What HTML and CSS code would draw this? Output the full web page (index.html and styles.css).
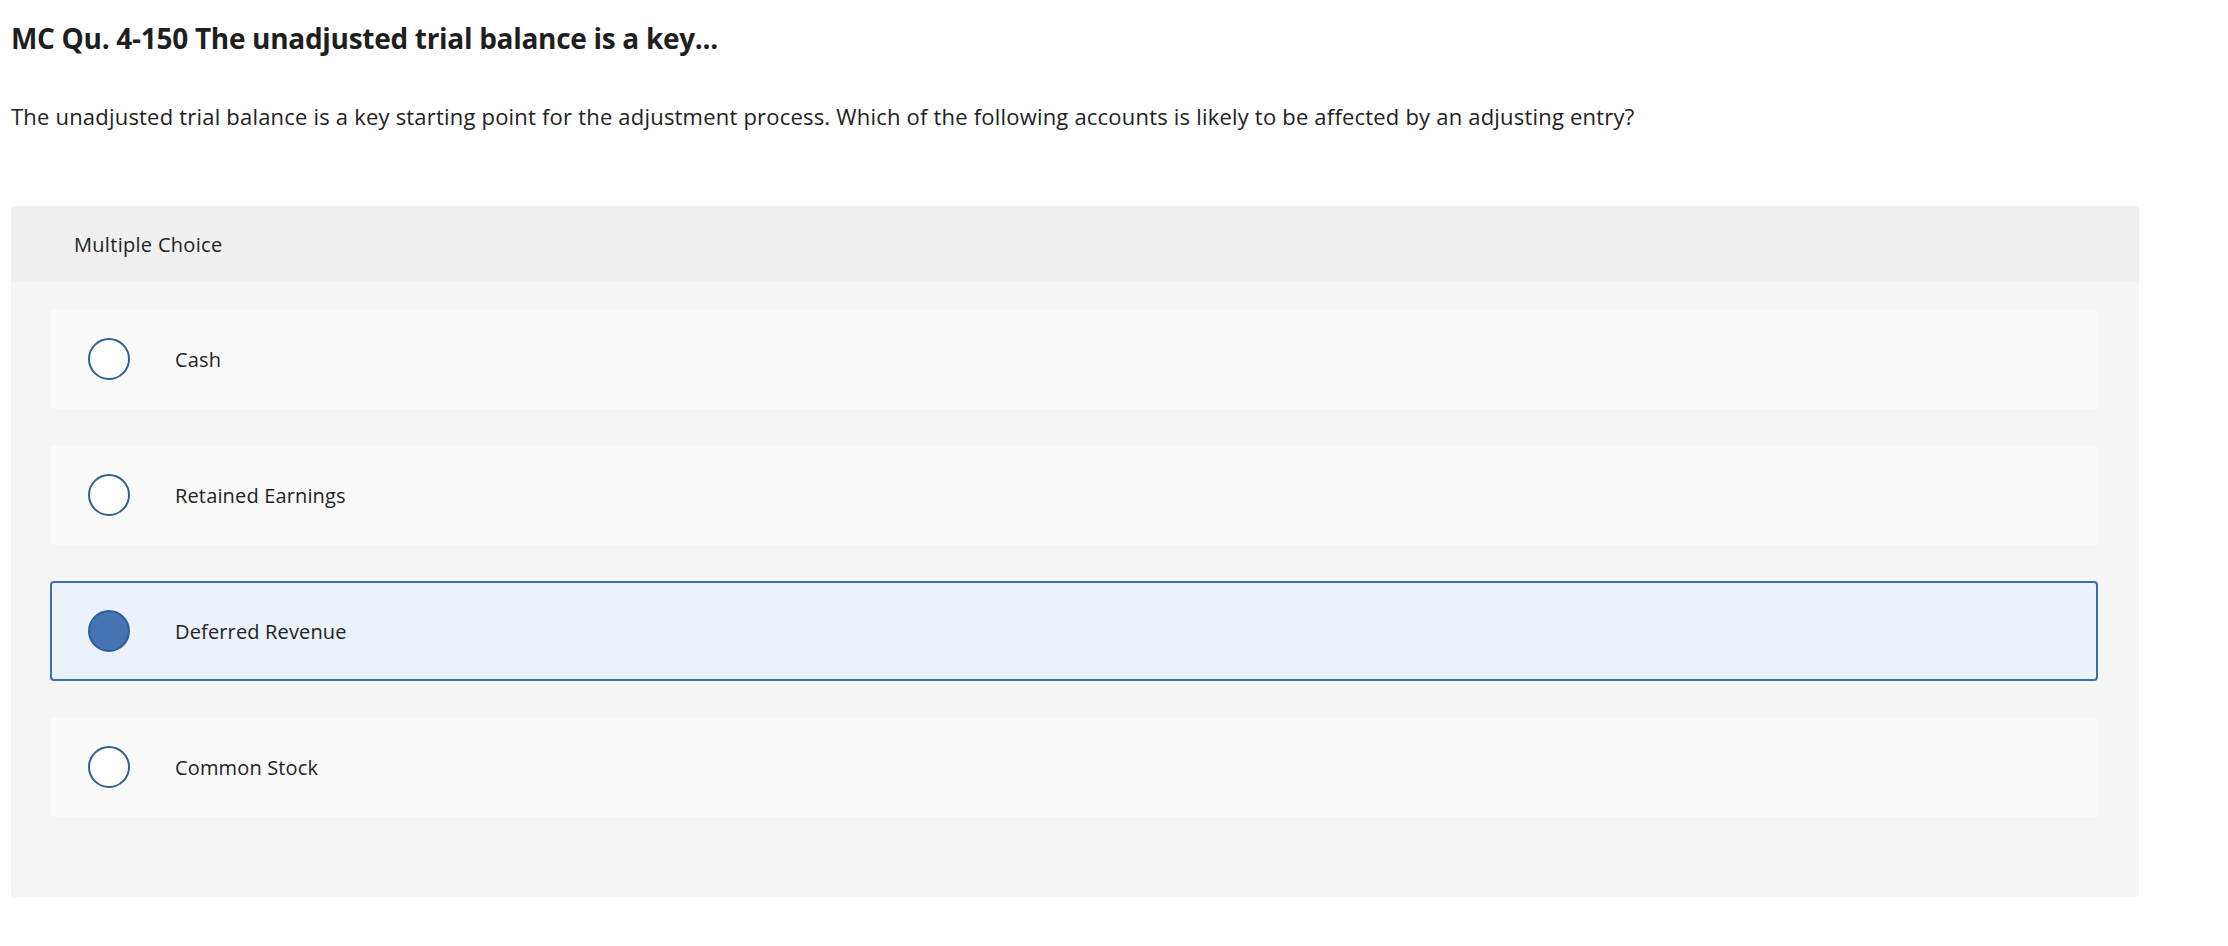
FILE: index.html
```html
<!DOCTYPE html>
<html>
<head>
<meta charset="utf-8">
<link rel="stylesheet" href="styles.css">
</head>
<body>
<div class="page">
  <h1 class="title">MC Qu. 4-150 The unadjusted trial balance is a key...</h1>
  <p class="prompt">The unadjusted trial balance is a key starting point for the adjustment process. Which of the following accounts is likely to be affected by an adjusting entry?</p>
  <div class="panel">
    <div class="panel-head">Multiple Choice</div>
    <div class="panel-body">
      <div class="option"><span class="radio"></span><span class="label">Cash</span></div>
      <div class="option"><span class="radio"></span><span class="label">Retained Earnings</span></div>
      <div class="option selected"><span class="radio"></span><span class="label">Deferred Revenue</span></div>
      <div class="option"><span class="radio"></span><span class="label">Common Stock</span></div>
    </div>
  </div>
</div>
</body>
</html>
```
FILE: styles.css
```css
html, body {
  margin: 0;
  background: #ffffff;
}
body {
  font-family: "Open Sans", "Liberation Sans", sans-serif;
  color: #222222;
}
.page {
  padding: 0 0 0 11px;
  width: 2128px;
}
.title {
  margin: 0;
  padding-top: 20px;
  font-size: 28px;
  line-height: 36px;
  font-weight: 700;
  color: #1f1f1f;
  letter-spacing: -0.3px;
}
.prompt {
  margin: 0;
  padding-top: 46px;
  font-size: 22px;
  line-height: 28px;
  letter-spacing: 0.2px;
}
.panel {
  margin-top: 76px;
  background: #f5f5f5;
  border-radius: 4px;
  overflow: hidden;
}
.panel-head {
  height: 76px;
  background: #f0f0f0;
  display: flex;
  align-items: center;
  padding-left: 63px;
  font-size: 20px;
  letter-spacing: 0.3px;
}
.panel-body {
  padding: 27px 41px 80px 39px;
  display: flex;
  flex-direction: column;
  gap: 36px;
}
.option {
  height: 100px;
  box-sizing: border-box;
  background: #fafafa;
  border: 1px solid #fafafa;
  border-radius: 4px;
  display: flex;
  align-items: center;
  padding-left: 37px;
}
.option.selected {
  background: #ebf2fa;
  border: 2px solid #3d6db0;
  padding-left: 36px;
}
.radio {
  width: 42px;
  height: 42px;
  box-sizing: border-box;
  border-radius: 50%;
  border: 2px solid #2f5f98;
  background: #ffffff;
  flex: none;
}
.selected .radio {
  background: #4574b3;
  border-color: #2f5f98;
}
.label {
  margin-left: 45px;
  font-size: 20px;
  letter-spacing: 0.15px;
}
```
